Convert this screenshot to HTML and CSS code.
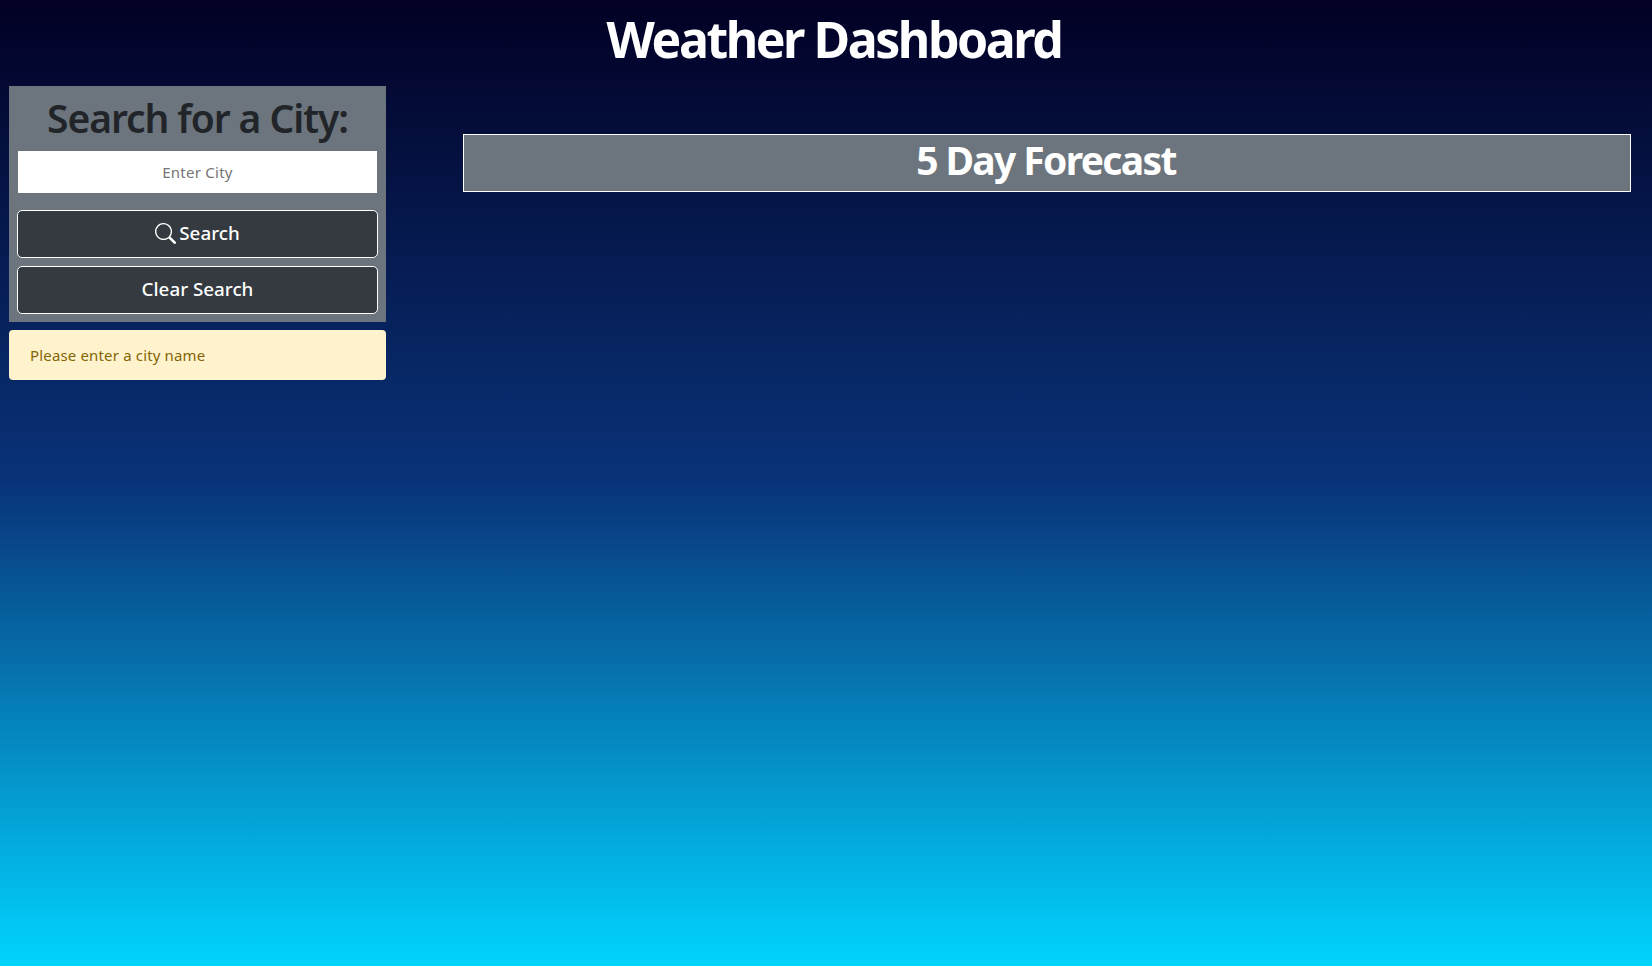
FILE: index.html
```html
<!DOCTYPE html>
<html lang="en">
<head>
<meta charset="utf-8">
<title>Weather Dashboard</title>
<link rel="stylesheet" href="styles.css">
</head>
<body>
<header class="header"><h1 class="title">Weather Dashboard</h1></header>
<main class="layout">
  <aside class="sidebar">
    <form class="search-card">
      <h2 class="search-title">Search for a City:</h2>
      <input class="city-input" type="text" placeholder="Enter City">
      <button class="btn" type="button">
        <svg class="icon" viewBox="0 0 16 16" fill="currentColor"><path d="M11.742 10.344a6.5 6.5 0 1 0-1.397 1.398h-.001c.03.04.062.078.098.115l3.85 3.85a1 1 0 0 0 1.415-1.414l-3.85-3.85a1.007 1.007 0 0 0-.115-.1zM12 6.5a5.5 5.5 0 1 1-11 0 5.5 5.5 0 0 1 11 0z"/></svg>
        <span>Search</span>
      </button>
      <button class="btn btn-clear" type="button">Clear Search</button>
    </form>
    <div class="alert" role="alert">Please enter a city name</div>
  </aside>
  <section class="forecast">
    <h2 class="forecast-title">5 Day Forecast</h2>
  </section>
</main>
</body>
</html>
```
FILE: styles.css
```css
* { box-sizing: border-box; }
body {
  margin: 0;
  min-height: 966px;
  font-family: "Noto Sans", sans-serif;
  font-size: 16px;
  color: #212529;
  background: linear-gradient(180deg, #020024 0%, #093379 50%, #00d4ff 100%);
}
.header {
  height: 86px;
  padding-left: 16px;
}
.title {
  margin: 0;
  text-align: center;
  font-size: 50px;
  font-weight: 700;
  line-height: 79px;
  letter-spacing: -2.45px;
  color: #fff;
}
.layout {
  display: grid;
  grid-template-columns: 377px 1168px;
  column-gap: 77px;
  padding-left: 9px;
  align-items: start;
}
.search-card {
  display: flex;
  flex-direction: column;
  height: 236px;
  padding: 0 8px;
  background: #6c757d;
}
.search-title {
  margin: 0;
  height: 65px;
  text-align: center;
  font-size: 39px;
  font-weight: 600;
  line-height: 64px;
  letter-spacing: -1.08px;
  white-space: nowrap;
}
.city-input {
  height: 42px;
  margin: 0 1px 17px;
  padding: 0;
  border: 0;
  text-align: center;
  font: 400 15px "Noto Sans", sans-serif;
  letter-spacing: 0.25px;
  background: #fff;
}
.city-input::placeholder { color: #757575; }
.btn {
  display: flex;
  align-items: center;
  justify-content: center;
  gap: 3px;
  height: 48px;
  padding: 0 0 1px;
  border: 1px solid #fff;
  border-radius: 5px;
  background: #343a40;
  color: #fff;
  font: 500 18.8px/25px "Noto Sans", sans-serif;
}
.btn-clear { margin-top: 8px; }
.icon { width: 21px; height: 21px; }
.alert {
  height: 50px;
  margin-top: 8px;
  padding: 0 21px;
  border-radius: 4px;
  background: #fff3cd;
  color: #856404;
  font-size: 15px;
  line-height: 50px;
  letter-spacing: 0.16px;
}
.forecast { padding-top: 48px; }
.forecast-title {
  margin: 0;
  height: 58px;
  padding-right: 2px;
  border: 1px solid #fff;
  background: #6c757d;
  color: #fff;
  text-align: center;
  font-size: 39px;
  font-weight: 700;
  line-height: 49px;
  letter-spacing: -1.65px;
}
```
